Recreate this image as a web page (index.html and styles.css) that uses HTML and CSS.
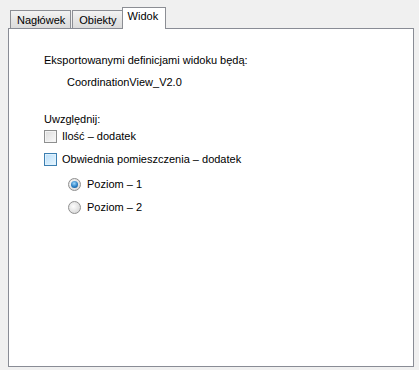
FILE: index.html
```html
<!DOCTYPE html>
<html lang="pl">
<head>
  <meta charset="UTF-8">
  <title>Widok</title>
  <link rel="stylesheet" href="styles.css">
</head>
<body>
  <div class="window">
    <div class="tabs">
      <div class="tab">Nagłówek</div>
      <div class="tab">Obiekty</div>
      <div class="tab active">Widok</div>
    </div>
    <div class="panel">
      <p class="label">Eksportowanymi definicjami widoku będą:</p>
      <p class="value">CoordinationView_V2.0</p>
      <p class="label include">Uwzględnij:</p>
      <label class="option first"><span class="check"></span>Ilość – dodatek</label>
      <label class="option second"><span class="check hover"></span>Obwiednia pomieszczenia – dodatek</label>
      <label class="option radio-row first-radio"><span class="radio checked"></span>Poziom – 1</label>
      <label class="option radio-row"><span class="radio"></span>Poziom – 2</label>
    </div>
  </div>
</body>
</html>
```

FILE: styles.css
```css
body {
  margin: 0;
  background: #f0f0f0;
  font-family: "Liberation Sans", Arial, sans-serif;
  font-size: 11px;
  color: #000;
}
.window {
  width: 406px;
  padding: 8px 0 0 8px;
}
.tabs {
  display: flex;
  align-items: flex-end;
  height: 20px;
  padding-left: 2px;
  position: relative;
  z-index: 1;
}
.tab {
  height: 17px;
  line-height: 18px;
  padding: 0 5px 0 6px;
  margin-right: 1px;
  border: 1px solid #8c8e94;
  border-bottom: none;
  background: linear-gradient(#f3f3f3, #e6e6e6 50%, #dcdcdc);
}
.tab.active {
  height: 21px;
  line-height: 16px;
  padding: 0 7px 0 5px;
  margin-right: 0;
  margin-left: -2px;
  margin-bottom: -1px;
  background: #fff;
}
.panel {
  border: 1px solid #898c95;
  background: #fff;
  padding: 0 0 0 35px;
  box-sizing: border-box;
  height: 339px;
}
p {
  margin: 0;
  line-height: 13px;
}
.label:first-child {
  padding-top: 25px;
}
.value {
  margin: 9px 0 0 23px;
}
.include {
  margin-top: 24px;
}
.option {
  display: flex;
  align-items: center;
  height: 13px;
  line-height: 13px;
  margin-top: 9px;
}
.option.first {
  margin-top: 4px;
}
.option.second {
  margin-top: 10px;
}
.check {
  width: 11px;
  height: 11px;
  margin-right: 5px;
  border: 1px solid #8e8f8f;
  background: linear-gradient(135deg, #dcdcdc, #f4f4f4 80%, #fdfdfd);
  box-shadow: inset 0 0 0 1px #f4f4f4;
}
.check.hover {
  border-color: #3c7fb1;
  background: linear-gradient(135deg, #b9defa, #def1fd 80%, #eef8fe);
  box-shadow: inset 0 0 0 1px #dff1fd;
}
.radio-row {
  margin-left: 24px;
}
.option.first-radio {
  margin-top: 12px;
}
.radio-row + .radio-row {
  margin-top: 10px;
}
.radio {
  width: 11px;
  height: 11px;
  margin-right: 6px;
  border-radius: 50%;
  border: 1px solid #8f8f8f;
  background: radial-gradient(circle at 40% 40%, #fdfdfd, #d8d8d8 80%);
  position: relative;
}
.radio.checked::after {
  content: "";
  position: absolute;
  left: 2px;
  top: 2px;
  width: 7px;
  height: 7px;
  border-radius: 50%;
  background: radial-gradient(circle at 45% 35%, #9fd8fb, #2a7fc4 55%, #0d4a86);
}
```
